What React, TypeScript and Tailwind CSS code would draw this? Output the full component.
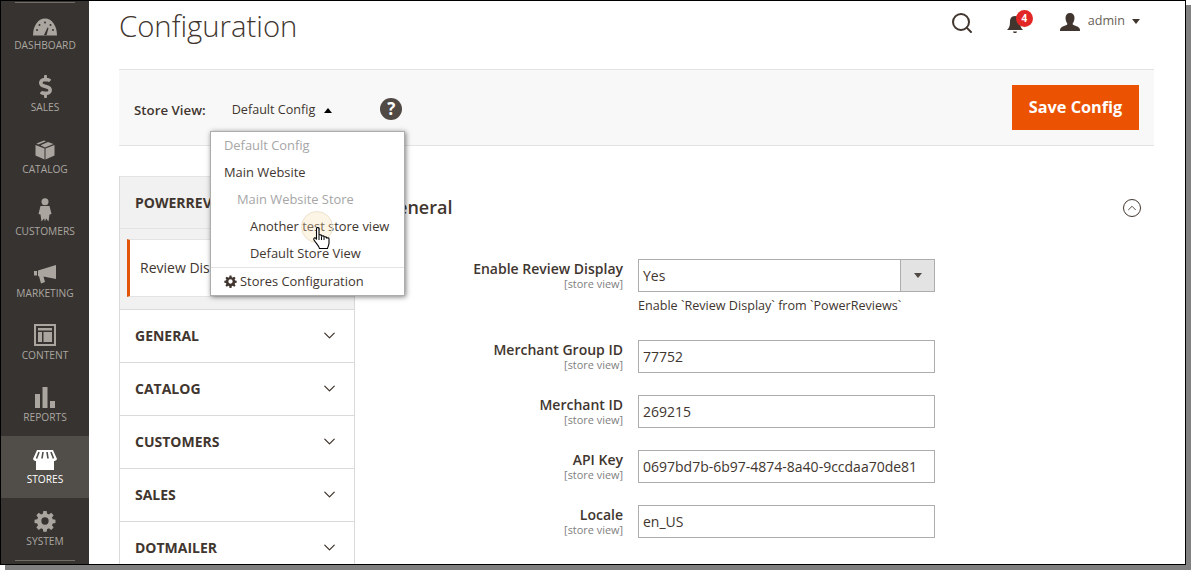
import { ChevronDown, ChevronUp, Search } from "lucide-react";
import { FaDollarSign } from "react-icons/fa";
import type { ReactNode } from "react";

const gearPath =
  "M10.2 1h3.6l.5 3a8 8 0 0 1 2 .8l2.5-1.8 2.6 2.6-1.8 2.5a8 8 0 0 1 .8 2l3 .5v3.6l-3 .5a8 8 0 0 1-.8 2l1.8 2.5-2.6 2.6-2.5-1.8a8 8 0 0 1-2 .8l-.5 3h-3.6l-.5-3a8 8 0 0 1-2-.8L5.200 21.800l-2.600-2.600 1.800-2.500a8 8 0 0 1-.8-2l-3-.5v-3.600l3-.5a8 8 0 0 1 .8-2L2.600 5.600l2.600-2.600 2.500 1.800a8 8 0 0 1 2-.8zM12 8a4 4 0 1 0 0 8 4 4 0 0 0 0-8z";

function Gauge() {
  return (
    <svg width="24" height="18" viewBox="0 0 24 18" fill="#aaa69f">
      <path d="M0 17.500C0 8 5 .5 12 .5s12 7.500 12 17z" />
      <path d="M11 17l3.500-7.500 1 .5L13.500 17.500z" fill="#373330" />
      <circle cx="4" cy="12" r="1" fill="#373330" />
      <circle cx="6.500" cy="7" r="1" fill="#373330" />
      <circle cx="12" cy="4.500" r="1" fill="#373330" />
      <circle cx="17.500" cy="7" r="1" fill="#373330" />
      <circle cx="20" cy="12" r="1" fill="#373330" />
    </svg>
  );
}

function Box() {
  return (
    <svg width="20" height="21" viewBox="0 0 20 20" fill="#aaa69f">
      <path d="M.5 5.500 9.500 9v11L.5 16z" />
      <path d="M10.500 9l9-3.500V16l-9 4z" />
      <path d="M1.500 4 9 1l2 .8-7.500 3.200z" />
      <path d="M5.500 5.800 13 2.600l5.500 1.800L10 8z" />
    </svg>
  );
}

function Person() {
  return (
    <svg width="14" height="24" viewBox="0 0 14 24" fill="#aaa69f">
      <circle cx="7" cy="3.800" r="3.500" />
      <path d="M2.500 8h9l2 8-2 .5-1 7L8 20.500 7 23.500 6 20.500 3.500 23.500l-1-7-2-.5z" />
    </svg>
  );
}

function Megaphone() {
  return (
    <svg width="22" height="19" viewBox="0 0 22 19" fill="#aaa69f">
      <path d="M0 6h3v4.500H0z" />
      <path d="M4 5.500 22 0v14L9.500 11.500 11 17l-4 1.500-2-7.200-1-.3z" />
    </svg>
  );
}

function Layout() {
  return (
    <svg width="22" height="22" viewBox="0 0 22 22" fill="#aaa69f">
      <path
        fillRule="evenodd"
        d="M0 0h22v22H0zM2 2v18h18V2zM4 4h14v2.500H4zM4 8h4v10H4zM9.500 8H18v10H9.500z"
      />
    </svg>
  );
}

function Bars() {
  return (
    <svg width="20" height="21" viewBox="0 0 20 21" fill="#aaa69f">
      <path d="M0 7h5v14H0zM7.500 0h5v21h-5zM15 14h5v7h-5z" />
    </svg>
  );
}

function Store() {
  return (
    <svg width="24" height="20" viewBox="0 0 24 20" fill="#ffffff">
      <path d="M4 0h16l4 9c-.5 1.500-2 2-3 2v9H3v-9c-1 0-2.500-.5-3-2z" />
      <path d="M6 2 3.500 8.500M10 2 9 8.500M14 2l1 6.500M18 2l2.500 6.500" stroke="#514d48" strokeWidth="1.600" />
    </svg>
  );
}

function Gear({ size, color }: { size: number; color: string }) {
  return (
    <svg width={size} height={size} viewBox="0 0 24 24" fill={color}>
      <path fillRule="evenodd" d={gearPath} />
    </svg>
  );
}

const navItems: { label: string; icon: ReactNode; active?: boolean }[] = [
  { label: "DASHBOARD", icon: <Gauge /> },
  { label: "SALES", icon: <FaDollarSign size={23} color="#aaa69f" /> },
  { label: "CATALOG", icon: <Box /> },
  { label: "CUSTOMERS", icon: <Person /> },
  { label: "MARKETING", icon: <Megaphone /> },
  { label: "CONTENT", icon: <Layout /> },
  { label: "REPORTS", icon: <Bars /> },
  { label: "STORES", icon: <Store />, active: true },
  { label: "SYSTEM", icon: <Gear size={22} color="#aaa69f" /> },
];

function Sidebar() {
  return (
    <div className="w-[88px] h-full shrink-0 bg-[#373330] flex flex-col">
      <div className="h-px mx-[14px] mt-px bg-[#736d67] shrink-0" />
      <div className="-mt-px flex flex-col">
        {navItems.map((item) => (
          <div
            key={item.label}
            className={`h-[62px] flex flex-col items-center ${item.active ? "bg-[#514d48] text-white" : "text-[#aaa6a0]"}`}
          >
            <div className="h-[35px] flex items-end justify-center shrink-0 pb-[1px]">{item.icon}</div>
            <div className="text-[10.2px] leading-[14px] mt-[1px]">{item.label}</div>
          </div>
        ))}
      </div>
      <div className="h-px mx-[14px] bg-[#736d67] shrink-0" />
    </div>
  );
}

function StoreSwitcher() {
  return (
    <div className="absolute left-[209px] top-[130px] w-[195px] h-[165px] bg-white border border-[#adadad] shadow-[1px_1px_5px_rgba(0,0,0,0.5)] text-[12.9px] text-[#41362f]">
      <div className="h-[135px]">
        <div className="h-[27px] leading-[27px] pl-[13px] text-[#a6a6a6]">Default Config</div>
        <div className="h-[27px] leading-[27px] pl-[13px]">Main Website</div>
        <div className="h-[27px] leading-[27px] pl-[26px] text-[#a6a6a6]">Main Website Store</div>
        <div className="h-[27px] leading-[27px] pl-[39px]">Another test store view</div>
        <div className="h-[27px] leading-[27px] pl-[39px]">Default Store View</div>
      </div>
      <div className="border-t border-[#e3e3e3] h-[28px] flex items-center pl-[13px] gap-[3px]">
        <Gear size={13} color="#41362f" />
        <span>Stores Configuration</span>
      </div>
      {/* click highlight and hand cursor */}
      <div className="absolute left-[90px] top-[79px] w-[32px] h-[32px] rounded-full bg-[#f5d9a8]/30 border border-[#eee3cf]" />
      <svg className="absolute left-[102px] top-[95px]" width="17" height="22" viewBox="0 0 17 22">
        <path
          d="M3.500 1.500C3.500.2 6 .2 6 1.500V8.500C6 7.500 8.500 7.500 8.500 8.500V9.500C8.500 8.500 11 8.500 11 9.500V10.500C11 9.500 13.500 9.500 13.500 10.500V11.500C13.500 10.500 16 10.500 16 11.500V16C16 18 15 19 14.500 21.500H6.500C6 19 3.500 17 1 13C.2 11 2 10 3 11.500L3.500 12.500z"
          fill="#fff"
          stroke="#000"
          strokeWidth="1.100"
        />
        <path d="M6 8.500V13M8.500 9.500V13M11 10.500V13" stroke="#000" strokeWidth="1" />
      </svg>
    </div>
  );
}

const tabs = ["GENERAL", "CATALOG", "CUSTOMERS", "SALES", "DOTMAILER"];

function Tabs() {
  return (
    <div className="w-[236px] shrink-0 h-[388px] overflow-hidden border-l border-r border-[#dadada]">
      <div className="h-[53px] bg-[#f1f1f1] border-t border-b border-[#e3e3e3] flex items-center pl-[15px] text-[14px] font-bold text-[#41362f]">
        POWERREVIEWS
      </div>
      <div className="h-[81px] pt-[10px] pl-[7px] border-b border-[#dadada] bg-[#f1f1f1]">
        <div className="h-[58px] pb-[1px] bg-white border-y border-[#e3e3e3] border-l-[3px] border-l-[#e3540b] flex items-center pl-[10px] text-[14px] text-[#41362f]">
          Review Display
        </div>
      </div>
      {tabs.map((tab) => (
        <div
          key={tab}
          className="h-[53px] pb-[2px] border-b border-[#dadada] flex items-center justify-between pl-[15px] pr-[15px] text-[14px] font-bold text-[#41362f]"
        >
          <span>{tab}</span>
          <ChevronDown size={19} strokeWidth={1.6} color="#41362f" />
        </div>
      ))}
    </div>
  );
}

function Scope({ label }: { label: string }) {
  return (
    <div className="w-[240px] shrink-0 text-right pr-[1px]">
      <div className="text-[14px] leading-[19px] font-semibold text-[#41362f]">{label}</div>
      <div className="text-[10.9px] leading-[11px] text-[#808080]">[store view]</div>
    </div>
  );
}

const fields = [
  { label: "Merchant Group ID", value: "77752" },
  { label: "Merchant ID", value: "269215" },
  { label: "API Key", value: "0697bd7b-6b97-4874-8a40-9ccdaa70de81" },
  { label: "Locale", value: "en_US" },
];

function ReviewForm() {
  return (
    <div className="flex-1 pl-[29px] pr-[13px]">
      <div className="h-[60px] pt-[19px] flex items-start justify-between">
        <span className="text-[18px] leading-[24px] font-semibold text-[#41362f]">General</span>
        <span className="w-[18px] h-[18px] mt-[4px] rounded-full border border-[#41362f] flex items-center justify-center">
          <ChevronUp size={14} strokeWidth={1.5} color="#41362f" />
        </span>
      </div>
      <div className="mt-[23px] flex flex-col">
        <div className="flex gap-[14px]">
          <Scope label="Enable Review Display" />
          <div>
            <div className="w-[297px] h-[33px] border border-[#adadad] flex">
              <div className="flex-1 pl-[4px] text-[14px] leading-[31px] text-[#41362f]">Yes</div>
              <div className="w-[34px] bg-[#e3e3e3] border-l border-[#adadad] flex items-center justify-center">
                <div className="w-0 h-0 border-l-[4px] border-r-[4px] border-t-[5px] border-l-transparent border-r-transparent border-t-[#514943]" />
              </div>
            </div>
            <div className="mt-[5px] text-[12.6px] leading-[17px] text-[#41362f] whitespace-nowrap">
              Enable `Review Display` from `PowerReviews`
            </div>
          </div>
        </div>
        {fields.map((field, i) => (
          <div key={field.label} className={`flex gap-[14px] ${i === 0 ? "mt-[26px]" : "mt-[22px]"}`}>
            <Scope label={field.label} />
            <div className="w-[297px] h-[33px] border border-[#adadad] pl-[4px] text-[14px] leading-[31px] text-[#41362f]">
              {field.value}
            </div>
          </div>
        ))}
      </div>
    </div>
  );
}

export default function App() {
  return (
    <div className="relative w-[1191px] h-[570px] overflow-hidden bg-white font-['Open_Sans',sans-serif]">
      <div className="relative w-[1186px] h-[565px] border border-black shadow-[5px_5px_0_#808080] bg-white overflow-hidden flex">
        <Sidebar />
        <div className="w-[1065px] pl-[30px] shrink-0">
          {/* page header */}
          <div className="h-[68px] flex items-start">
            <h1 className="mt-[4px] text-[29.3px] leading-[42px] font-light text-[#41362f]">Configuration</h1>
            <div className="ml-auto flex items-center mt-[7px] mr-[14px] text-[#41362f]">
              <Search size={24} strokeWidth={2} color="#41362f" className="mt-[3px]" />
              <div className="relative ml-[32px] w-[22px] h-[22px] mt-[3px]">
                <svg width="18" height="20" viewBox="0 0 18 20" fill="#41362f" className="mt-[3px]">
                  <path d="M9 1c4 0 5 3 5 6 0 4 1 6 3 8H1c2-2 3-4 3-8 0-3 1-6 5-6zM7 16.500h4c0 2-4 2-4 0z" />
                </svg>
                <span className="absolute left-[10px] top-[-2px] w-[17px] h-[17px] rounded-full bg-[#e22626] text-white text-[10px] font-bold leading-[17px] text-center">
                  4
                </span>
              </div>
              <svg width="20" height="18" viewBox="0 0 20 18" fill="#41362f" className="ml-[32px]">
                <path d="M10 0c3 0 4.500 2 4.500 5S13 10 12.500 11c1 2 7.500 2 7.500 6v1H0v-1c0-4 6.500-4 7.500-6C7 10 5.500 8 5.500 5S7 0 10 0z" />
              </svg>
              <span className="ml-[8px] text-[12.6px] text-[#676056]">admin</span>
              <div className="ml-[7px] w-0 h-0 border-l-[4px] border-r-[4px] border-t-[5px] border-l-transparent border-r-transparent border-t-[#41362f]" />
            </div>
          </div>
          {/* store view bar */}
          <div className="h-[77px] bg-[#f8f8f8] border-y border-[#e3e3e3] flex items-center pl-[15px] pr-[15px]">
            <span className="text-[13.3px] font-semibold text-[#41362f] mt-[6px]">Store View:</span>
            <span className="ml-[26px] text-[12.6px] text-[#41362f] mt-[6px]">Default Config</span>
            <div className="ml-[9px] mt-[6px] w-0 h-0 border-l-[4px] border-r-[4px] border-b-[5px] border-l-transparent border-r-transparent border-b-black" />
            <span className="ml-[48px] mt-[2px] w-[22px] h-[22px] rounded-full bg-[#514943] text-white text-[17px] font-bold leading-[22px] text-center">
              ?
            </span>
            <button className="ml-auto w-[127px] h-[45px] bg-[#eb5202] text-white text-[16.3px] font-bold pb-[1px]">
              Save Config
            </button>
          </div>
          {/* config area */}
          <div className="mt-[30px] flex">
            <Tabs />
            <ReviewForm />
          </div>
        </div>
        <StoreSwitcher />
      </div>
    </div>
  );
}
